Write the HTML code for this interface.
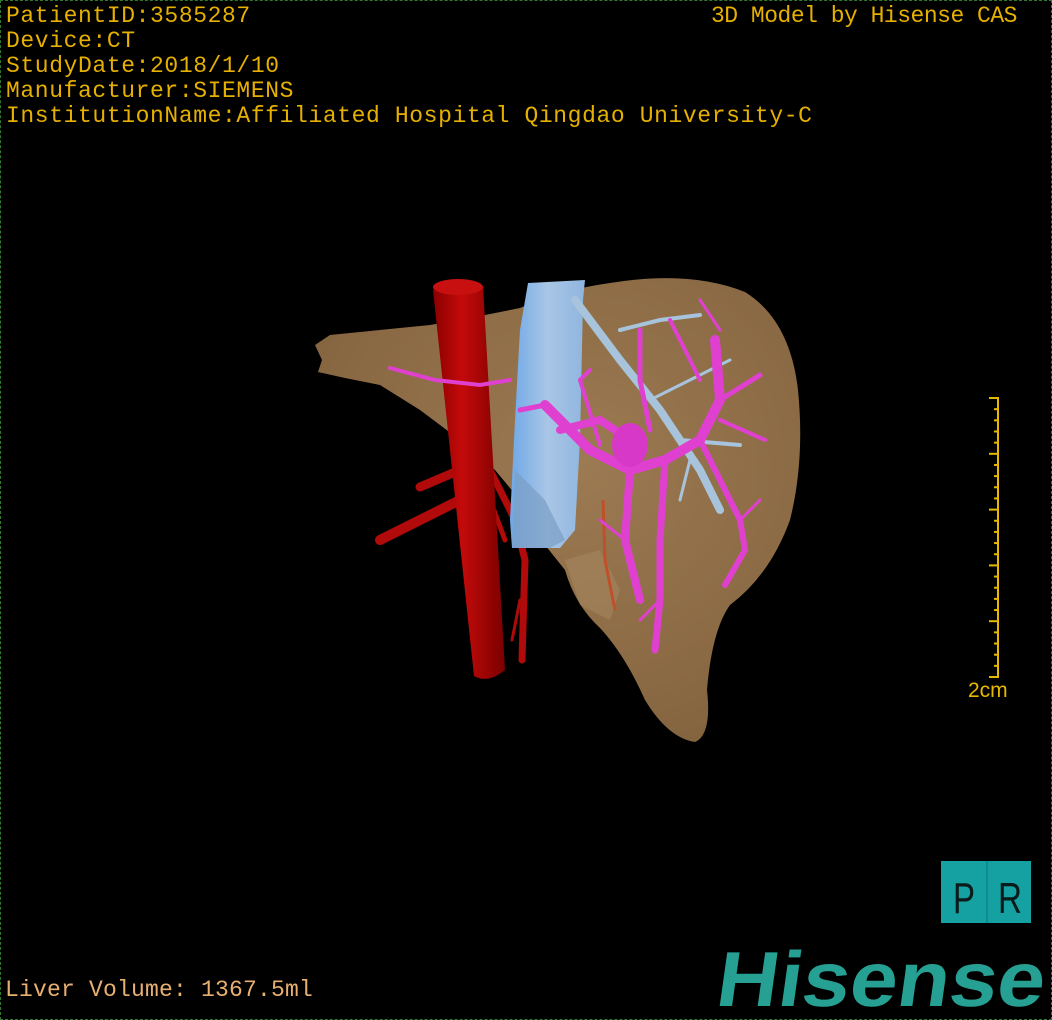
<!DOCTYPE html>
<html><head><meta charset="utf-8"><style>
html,body{margin:0;padding:0;background:#000;}
body{width:1052px;height:1020px;position:relative;overflow:hidden;font-family:"Liberation Mono",monospace;}
.t{position:absolute;color:#e6b000;font-size:23px;line-height:25px;white-space:pre;letter-spacing:0.6px}
#b{position:absolute;left:0;top:0;width:1050px;height:1018px;border:1px dashed #2f7a2f;}
</style></head><body>
<div id="b"></div>
<div class="t" style="left:6px;top:4px">PatientID:3585287
Device:CT
StudyDate:2018/1/10
Manufacturer:SIEMENS
InstitutionName:Affiliated Hospital Qingdao University-C</div>
<div class="t" style="left:711px;top:4px;letter-spacing:-0.5px">3D Model by Hisense CAS</div>
<div class="t" style="left:5px;top:978px;color:#e8b070;letter-spacing:0.2px">Liver Volume: 1367.5ml</div>
<svg width="1052" height="1020" style="position:absolute;left:0;top:0">
<defs>
<radialGradient id="lg" cx="0.55" cy="0.4" r="0.65"><stop offset="0" stop-color="#9c7a52"/><stop offset="1" stop-color="#84643f"/></radialGradient>
<linearGradient id="ao" x1="0" x2="1"><stop offset="0" stop-color="#8a0000"/><stop offset="0.4" stop-color="#c40a0a"/><stop offset="1" stop-color="#7a0000"/></linearGradient>
<linearGradient id="iv" x1="0" x2="1"><stop offset="0" stop-color="#6fa8e8"/><stop offset="0.5" stop-color="#a9c6e6"/><stop offset="1" stop-color="#8fb5de"/></linearGradient>
</defs>
<path d="M315,345 L330,335 L380,330 L430,325 L470,318 L520,308 Q560,290 610,283 Q690,270 745,292 Q790,320 798,390 Q805,460 790,520 Q770,575 730,605 Q712,630 707,690 Q712,735 695,742 Q668,738 645,700 Q625,655 600,628 Q575,605 565,570 L545,545 L520,500 L495,470 L460,440 L420,410 L380,385 L345,378 L318,372 L322,360 Z" fill="url(#lg)"/>
<path d="M565,560 L600,550 L620,590 L610,620 L580,605 Z" fill="#a88a62" opacity="0.5"/>
<g stroke="#b00a0a" stroke-linecap="round" fill="none">
<path d="M470,495 L380,540" stroke-width="10"/>
<path d="M460,470 L420,487" stroke-width="9"/>
<path d="M490,470 L515,520 L525,560 L522,660" stroke-width="7"/>
<path d="M490,500 L505,540" stroke-width="5"/>
<path d="M520,600 L512,640" stroke-width="3"/>
</g>
<path d="M603,500 L605,560 L615,610" stroke="#c0502a" stroke-width="3" fill="none"/>
<path d="M433,290 Q458,278 483,286 L505,670 Q488,684 474,676 Z" fill="url(#ao)"/>
<ellipse cx="458" cy="287" rx="25" ry="8" fill="#c81010"/>
<path d="M528,283 L585,280 L583,300 L580,440 L575,530 L560,548 L512,548 L510,520 L515,420 L520,330 Z" fill="url(#iv)"/>
<path d="M515,470 L545,500 L565,540 L550,548 L512,548 Z" fill="#7a9ec5" opacity="0.7"/>
<g stroke="#a8c4dc" stroke-linecap="round" fill="none">
<path d="M575,300 L620,360 L660,410 L700,470 L720,510" stroke-width="8"/>
<path d="M620,330 L660,320 L700,315" stroke-width="4"/>
<path d="M650,400 L690,380 L730,360" stroke-width="3"/>
<path d="M680,440 L740,445" stroke-width="4"/>
<path d="M690,460 L680,500" stroke-width="3"/>
</g>
<g stroke="#e040d0" stroke-linecap="round" fill="none">
<path d="M545,405 L590,450 L630,470 L665,460 L700,440 L720,400 L715,340" stroke-width="10"/>
<path d="M560,430 L600,420 L630,440" stroke-width="8"/>
<path d="M630,470 L625,540 L640,600" stroke-width="8"/>
<path d="M665,460 L660,540 L660,600 L655,650" stroke-width="7"/>
<path d="M700,440 L720,480 L740,520 L745,550 L725,585" stroke-width="6"/>
<path d="M720,400 L760,375" stroke-width="5"/>
<path d="M720,420 L765,440" stroke-width="4"/>
<path d="M700,380 L680,340 L670,320" stroke-width="4"/>
<path d="M650,430 L640,380 L640,330" stroke-width="5"/>
<path d="M600,445 L580,380 L590,370" stroke-width="4"/>
<path d="M545,405 L520,410" stroke-width="5"/>
<path d="M390,368 L435,380 L480,385 L510,380" stroke-width="4"/>
<path d="M625,540 L600,520" stroke-width="3"/>
<path d="M660,600 L640,620" stroke-width="3"/>
<path d="M740,520 L760,500" stroke-width="3"/>
<path d="M700,300 L720,330" stroke-width="3"/>
</g>
<ellipse cx="630" cy="445" rx="18" ry="22" fill="#d838c8"/>
<g stroke="#e6b800" stroke-width="2">
<line x1="998" y1="397" x2="998" y2="678"/>
<line x1="989" y1="398" x2="998" y2="398"/>
<line x1="989" y1="677" x2="998" y2="677"/>
<g id="tk"></g>
</g>
<text x="968" y="697" fill="#e6b800" font-family="Liberation Sans, sans-serif" font-size="21">2cm</text>
<rect x="941" y="861" width="90" height="62" fill="#15a0a2"/>
<line x1="987" y1="861" x2="987" y2="923" stroke="#0f8c8e" stroke-width="2"/>
<text x="953" y="913" font-family="Liberation Sans Narrow, Liberation Sans, sans-serif" font-size="44" fill="#0b1a1a" textLength="22" lengthAdjust="spacingAndGlyphs">P</text>
<text x="998" y="913" font-family="Liberation Sans Narrow, Liberation Sans, sans-serif" font-size="44" fill="#0b1a1a" textLength="24" lengthAdjust="spacingAndGlyphs">R</text>
<g transform="translate(714,1006) skewX(-8)">
<text x="0" y="0" font-family="Liberation Sans, sans-serif" font-size="78" font-weight="bold" fill="#27a094" textLength="328" lengthAdjust="spacingAndGlyphs">Hisense</text>
</g>
</svg>
<script>
var g=document.getElementById('tk'),s='';
for(var i=1;i<25;i++){var y=398+i*279/25;var x=(i%5==0)?989:994;s+='<line x1="'+x+'" y1="'+y+'" x2="998" y2="'+y+'"/>';}
g.innerHTML=s;
</script>
</body></html>
